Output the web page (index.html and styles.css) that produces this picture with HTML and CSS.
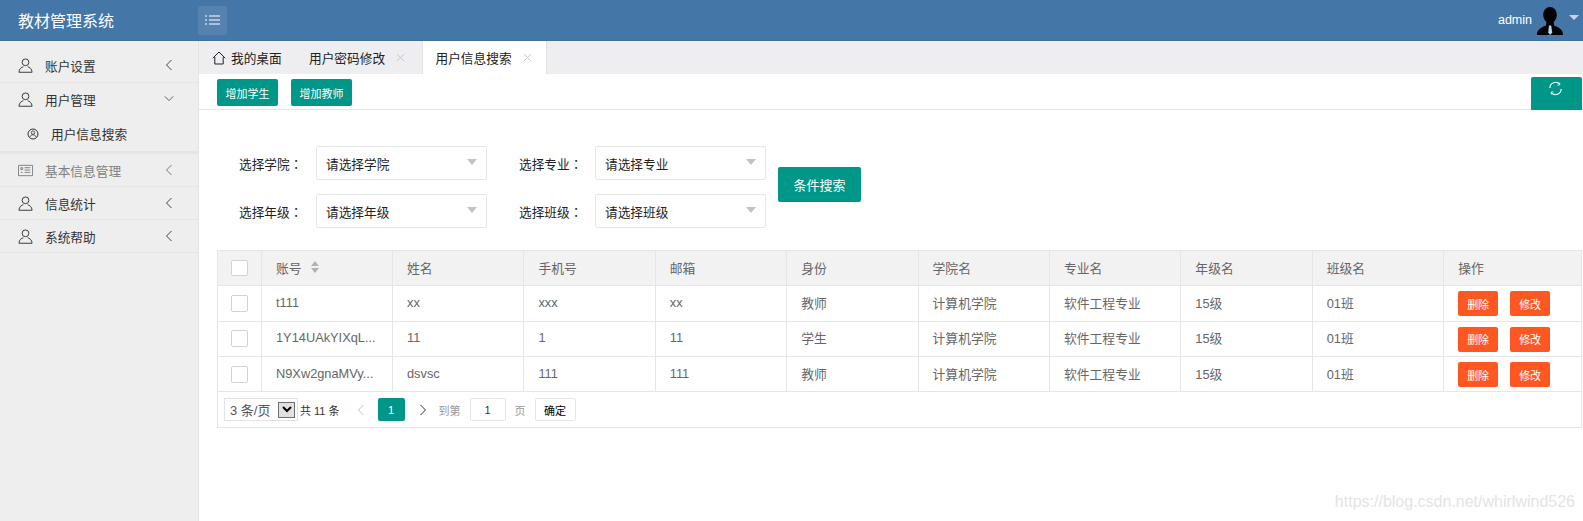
FILE: index.html
```html
<!DOCTYPE html>
<html lang="zh-CN">
<head>
<meta charset="utf-8">
<title>教材管理系统</title>
<link rel="stylesheet" href="styles.css">
</head>
<body>
<svg class="defs" width="0" height="0" aria-hidden="true">
  <symbol id="user" viewBox="0 0 16 16"><circle cx="8" cy="4.6" r="3.6" fill="none" stroke="currentColor"/><path d="M1 15.2c0-3.8 3-5.4 4.7-5.9M15 15.2c0-3.8-3-5.4-4.7-5.9M1 15.2h14" fill="none" stroke="currentColor"/></symbol>
  <symbol id="left" viewBox="0 0 8 12"><path d="M6.5 1 1.5 6l5 5" fill="none" stroke="currentColor"/></symbol>
  <symbol id="close" viewBox="0 0 10 10"><path d="M1 1l8 8M9 1l-8 8" fill="none" stroke="currentColor"/></symbol>
</svg>
<header class="topbar">
  <div class="brand">教材管理系统</div>
  <button class="menu-toggle" aria-label="菜单">
    <svg width="15" height="10" viewBox="0 0 15 10"><path d="M0 1h2M4 1h11M0 5h2M4 5h11M0 9h2M4 9h11" fill="none" stroke="#fff"/></svg>
  </button>
  <div class="account">
    <span>admin</span>
    <svg class="avatar" width="26" height="28" viewBox="0 0 26 28"><ellipse cx="13" cy="8" rx="6.800" ry="8" fill="#000"/><path d="M0 28C0 22.500 4 20.500 9 18.500L9.500 13h7l.5 5.500C22 20.500 26 22.500 26 28z" fill="#000"/><path d="M12 18.500h2.200l1 7-2 2.500-2-2.500z" fill="#b9d3e8"/></svg>
    <i class="caret-light"></i>
  </div>
</header>
<div class="body-row">
  <aside class="sidebar">
    <div class="nav-item"><svg class="nav-icon"><use href="#user"/></svg><span>账户设置</span><svg class="chev"><use href="#left"/></svg></div>
    <div class="nav-group">
      <div class="nav-item nav-open"><svg class="nav-icon"><use href="#user"/></svg><span>用户管理</span><svg class="chev-down" viewBox="0 0 12 8"><path d="M1 1.500l5 5 5-5" fill="none" stroke="currentColor"/></svg></div>
      <div class="nav-sub"><svg class="sub-icon" viewBox="0 0 12 12"><circle cx="6" cy="6" r="5" fill="none" stroke="currentColor"/><circle cx="6" cy="4.600" r="1.700" fill="none" stroke="currentColor" stroke-width=".8"/><path d="M2.800 9c.5-1.600 1.700-2.200 3.200-2.200S8.700 7.400 9.200 9" fill="none" stroke="currentColor" stroke-width=".8"/></svg><span>用户信息搜索</span></div>
    </div>
    <div class="nav-item nav-muted"><svg class="nav-icon" viewBox="0 0 16 16"><path d="M.5 2.500h15v11H.5zM3 5h2v2H3zM7 5h6M7 7.500h6M7 10h6M3 10h2" fill="none" stroke="currentColor"/></svg><span>基本信息管理</span><svg class="chev"><use href="#left"/></svg></div>
    <div class="nav-item"><svg class="nav-icon"><use href="#user"/></svg><span>信息统计</span><svg class="chev"><use href="#left"/></svg></div>
    <div class="nav-item"><svg class="nav-icon"><use href="#user"/></svg><span>系统帮助</span><svg class="chev"><use href="#left"/></svg></div>
  </aside>
  <main class="main">
    <nav class="tabs">
      <div class="tab tab-home"><svg width="14" height="14" viewBox="0 0 14 14"><path d="M.8 7.200 7 1l6.200 6.200M2.800 6v7h8.400V6" fill="none" stroke="#222"/></svg><span>我的桌面</span></div>
      <div class="tab tab-pw"><span>用户密码修改</span><svg class="tab-close"><use href="#close"/></svg></div>
      <div class="tab tab-active"><span>用户信息搜索</span><svg class="tab-close"><use href="#close"/></svg></div>
    </nav>
    <div class="toolbar">
      <button class="btn btn-sm">增加学生</button>
      <button class="btn btn-sm">增加教师</button>
      <button class="btn btn-refresh" aria-label="刷新"><svg width="15" height="15" viewBox="0 0 16 16"><path d="M2 7.500A6 6 0 0 1 12.500 3.500M14 8.500A6 6 0 0 1 3.500 12.500" fill="none" stroke="#fff" stroke-width="1.200"/><path d="M12.500 1.500v2.800H10M3.500 14.500v-2.800H6" fill="none" stroke="#fff" stroke-width=".8"/></svg></button>
    </div>
    <section class="content">
      <form class="filters">
        <div class="filter-grid">
          <label class="flabel">选择学院<span class="colon" lang="zh-TW">：</span></label><div class="select"><span>请选择学院</span><i class="caret"></i></div>
          <label class="flabel flabel-far">选择专业<span class="colon" lang="zh-TW">：</span></label><div class="select"><span>请选择专业</span><i class="caret"></i></div>
          <label class="flabel">选择年级<span class="colon" lang="zh-TW">：</span></label><div class="select"><span>请选择年级</span><i class="caret"></i></div>
          <label class="flabel flabel-far">选择班级<span class="colon" lang="zh-TW">：</span></label><div class="select"><span>请选择班级</span><i class="caret"></i></div>
        </div>
        <button type="button" class="btn btn-search">条件搜索</button>
      </form>
      <div class="table-box">
        <table class="grid">
          <colgroup><col class="c-check"><col class="c-id"><col class="c"><col class="c"><col class="c"><col class="c"><col class="c"><col class="c"><col class="c"><col class="c"><col></colgroup>
          <thead>
            <tr>
              <th class="check"><i class="box box-head"></i></th>
              <th><span class="cell">账号<span class="sort"><i class="up"></i><i class="down"></i></span></span></th>
              <th><span class="cell">姓名</span></th><th><span class="cell">手机号</span></th><th><span class="cell">邮箱</span></th><th><span class="cell">身份</span></th><th><span class="cell">学院名</span></th><th><span class="cell">专业名</span></th><th><span class="cell">年级名</span></th><th><span class="cell">班级名</span></th><th><span class="cell">操作</span></th>
            </tr>
          </thead>
          <tbody>
            <tr>
              <td class="check"><i class="box"></i></td><td><span class="cell">t111</span></td><td><span class="cell">xx</span></td><td><span class="cell">xxx</span></td><td><span class="cell">xx</span></td><td><span class="cell">教师</span></td><td><span class="cell">计算机学院</span></td><td><span class="cell">软件工程专业</span></td><td><span class="cell">15级</span></td><td><span class="cell">01班</span></td>
              <td><span class="cell ops"><button class="btn-op">删除</button><button class="btn-op">修改</button></span></td>
            </tr>
            <tr>
              <td class="check"><i class="box"></i></td><td><span class="cell">1Y14UAkYIXqL...</span></td><td><span class="cell">11</span></td><td><span class="cell">1</span></td><td><span class="cell">11</span></td><td><span class="cell">学生</span></td><td><span class="cell">计算机学院</span></td><td><span class="cell">软件工程专业</span></td><td><span class="cell">15级</span></td><td><span class="cell">01班</span></td>
              <td><span class="cell ops"><button class="btn-op">删除</button><button class="btn-op">修改</button></span></td>
            </tr>
            <tr>
              <td class="check"><i class="box"></i></td><td><span class="cell">N9Xw2gnaMVy...</span></td><td><span class="cell">dsvsc</span></td><td><span class="cell">111</span></td><td><span class="cell">111</span></td><td><span class="cell">教师</span></td><td><span class="cell">计算机学院</span></td><td><span class="cell">软件工程专业</span></td><td><span class="cell">15级</span></td><td><span class="cell">01班</span></td>
              <td><span class="cell ops"><button class="btn-op">删除</button><button class="btn-op">修改</button></span></td>
            </tr>
          </tbody>
        </table>
        <div class="pager">
          <div class="size-select"><span>3 条/页</span><i class="native-arrow"><svg width="10" height="7" viewBox="0 0 10 7"><path d="M1 1l4 4 4-4" fill="none" stroke="#000" stroke-width="2"/></svg></i></div>
          <span class="total">共 11 条</span>
          <svg class="pg-prev" width="8" height="12"><use href="#left"/></svg>
          <span class="page-cur">1</span>
          <svg class="pg-next" width="8" height="12" viewBox="0 0 8 12"><path d="M1.500 1l5 5-5 5" fill="none" stroke="#333"/></svg>
          <span class="pg-text pg-goto">到第</span>
          <span class="pg-input">1</span>
          <span class="pg-text pg-unit">页</span>
          <span class="pg-ok">确定</span>
        </div>
      </div>
      <div class="watermark">https://blog.csdn.net/whirlwind526</div>
    </section>
  </main>
</div>
</body>
</html>
```
FILE: styles.css
```css
* { box-sizing: border-box; }
html, body { margin: 0; height: 100%; overflow: hidden; }
body {
  font-family: "Liberation Sans", "Noto Sans CJK SC", sans-serif;
  font-size: 12.700px;
  color: #333;
  background: #fff;
  display: flex;
  flex-direction: column;
}
.defs { position: absolute; }
button { font-family: inherit; border: 0; padding: 0; cursor: pointer; }
i { display: block; font-style: normal; }

.topbar {
  flex: none;
  height: 41px;
  background: #4476a7;
  border-bottom: 1px solid #3f6f9f;
  display: flex;
  align-items: center;
  color: #fff;
}
.brand { width: 198px; padding-left: 18px; font-size: 16px; }
.menu-toggle {
  width: 29px;
  height: 29px;
  border-radius: 2px;
  background: #5582ae;
  display: flex;
  align-items: center;
  justify-content: center;
}
.account { margin-left: auto; display: flex; align-items: center; font-size: 12.500px; }
.avatar { margin-left: 5px; margin-top: 1px; }
.caret-light {
  margin: 0 4px 0 6px;
  border: 5px solid transparent;
  border-top: 5px solid #c6d5e4;
  border-bottom: 0;
  width: 10px;
  height: 5px;
  transform: translateY(-3px);
}

.body-row { flex: 1; display: flex; min-height: 0; }
.sidebar {
  flex: none;
  width: 199px;
  background: #eee;
  border-right: 1px solid #e2e2e2;
  color: #333;
}
.nav-item {
  height: 33px;
  display: flex;
  align-items: center;
  padding: 0 24px 0 18px;
  border-bottom: 1px solid #e5e5e5;
}
.sidebar > .nav-item:first-child { height: 42px; padding-top: 8px; }
.nav-open { border-bottom: 0; }
.nav-group { border-bottom: 3px solid #e5e5e5; }
.nav-icon { width: 15px; height: 15px; margin-right: 12px; }
.nav-item span { flex: 1; }
.chev { width: 8px; height: 12px; color: #444; margin-right: 1px; margin-top: -1px; }
.chev-down { width: 10px; height: 7px; color: #444; margin-top: -3px; }
.nav-muted { color: #7f7f7f; }
.nav-muted .chev { color: #777; }
.nav-sub { height: 35px; display: flex; align-items: center; padding-left: 27px; }
.sub-icon { width: 12px; height: 12px; margin-right: 12px; }

.main { flex: 1; min-width: 0; display: flex; flex-direction: column; }
.tabs { flex: none; height: 33px; background: #eeeef0; display: flex; color: #222; }
.tab { display: flex; align-items: center; height: 33px; }
.tab-home { width: 100px; padding-left: 13px; gap: 5px; }
.tab-pw { width: 122.500px; padding-left: 10px; }
.tab-active {
  width: 125px;
  padding-left: 13px;
  background: #fff;
  border-left: 1px solid #e2e2e2;
  border-right: 1px solid #e2e2e2;
}
.tab-close { width: 9px; height: 9px; margin-left: 11px; color: #c2c2c2; }
.toolbar {
  flex: none;
  height: 36px;
  border-bottom: 1px solid #e6e6e6;
  display: flex;
  align-items: flex-start;
  padding-top: 5px;
  padding-left: 18px;
  gap: 13px;
}
.btn { background: #009688; color: #fff; border-radius: 2px; }
.btn-sm { width: 61px; height: 27px; font-size: 11px; }
.btn-refresh {
  margin-left: auto;
  margin-right: 1px;
  margin-top: -2px;
  width: 51px;
  height: 33px;
  border-radius: 2px 2px 0 0;
  display: flex;
  align-items: flex-start;
  justify-content: center;
  padding: 4px 2px 0 0;
}
.content { flex: 1; padding: 36px 1px 0 18px; position: relative; }
.filters { display: flex; align-items: flex-start; }
.filter-grid {
  display: grid;
  grid-template-columns: 77px 171px 108px 171px;
  grid-auto-rows: 34px;
  row-gap: 14px;
  padding-left: 22px;
  align-items: center;
}
.flabel { color: #222; white-space: nowrap; }
.flabel-far { padding-left: 32px; }
.colon { font-family: "Noto Sans CJK TC", sans-serif; }
.select {
  height: 34px;
  border: 1px solid #e6e6e6;
  border-radius: 2px;
  background: #fff;
  display: flex;
  align-items: center;
  justify-content: space-between;
  padding: 0 9px;
  color: #222;
}
.caret { width: 0; height: 0; border: 5.500px solid transparent; border-top: 6px solid #c2c2c2; border-bottom: 0; margin-top: -2px; }
.btn-search { width: 83px; height: 35px; font-size: 13px; margin-left: 12px; margin-top: 21px; }

.table-box { margin-top: 22px; border: 1px solid #e6e6e6; border-top: 0; }
.grid { width: 100%; border-collapse: collapse; table-layout: fixed; color: #666; }
.c-check { width: 43.500px; }
.c-id { width: 131px; }
.c { width: 131.400px; }
.grid th, .grid td { border: 1px solid #e6e6e6; height: 35.300px; padding: 0; font-weight: 400; text-align: left; font-size: 12.800px; }
.grid tr > :first-child { border-left: 0; }
.grid tr > :last-child { border-right: 0; }
.grid th { background: #f2f2f2; }
.cell { display: flex; align-items: center; padding: 0 0 2px 14px; white-space: nowrap; }
.check .box { margin: 0 auto; }
.box { width: 17px; height: 17px; border: 1px solid #d2d2d2; border-radius: 2px; background: #fff; }
.box-head { height: 16px; }
.sort { margin-left: 9px; display: flex; flex-direction: column; gap: 2px; }
.sort i { width: 0; height: 0; border: 4px solid transparent; }
.sort .up { border-top: 0; border-bottom: 5px solid #b2b2b2; }
.sort .down { border-bottom: 0; border-top: 5px solid #b2b2b2; }
.ops { gap: 12px; padding-bottom: 0; }
.btn-op { width: 40px; height: 25px; background: #ff5722; color: #fff; font-size: 11px; border-radius: 2px; margin-top: 1px; }

.pager { height: 35px; display: flex; align-items: center; padding-left: 6px; font-size: 12px; color: #333; }
.size-select {
  width: 74px;
  height: 23px;
  border: 1px solid #e2e2e2;
  display: flex;
  align-items: center;
  padding-left: 5px;
  justify-content: space-between;
  font-size: 13px;
  color: #555;
}
.native-arrow {
  width: 17px;
  height: 16px;
  margin-right: 2px;
  background: #e1e1e1;
  border: 1px solid #707070;
  display: flex;
  align-items: center;
  justify-content: center;
}
.total { margin-left: 2px; font-size: 11px; color: #333; }
.pg-prev { margin-left: 17px; color: #c2c2c2; }
.page-cur {
  width: 27px;
  height: 23px;
  margin-left: 13px;
  background: #009688;
  color: #fff;
  border-radius: 2px;
  display: flex;
  align-items: center;
  justify-content: center;
  font-size: 11px;
}
.pg-next { margin-left: 14px; }
.pg-text { color: #999; font-size: 11px; }
.pg-goto { margin-left: 12px; }
.pg-input {
  width: 36px;
  height: 23px;
  margin-left: 9px;
  border: 1px solid #e6e6e6;
  border-radius: 2px;
  display: flex;
  align-items: center;
  justify-content: center;
  color: #333;
  font-size: 11px;
}
.pg-unit { margin-left: 9px; }
.pg-ok {
  width: 41px;
  height: 23px;
  margin-left: 9px;
  border: 1px solid #e6e6e6;
  border-radius: 2px;
  display: flex;
  align-items: center;
  justify-content: center;
  color: #000;
  font-size: 11px;
}
.watermark {
  position: absolute;
  right: 8px;
  bottom: 10px;
  font-size: 16px;
  color: #e4e4e4;
}
```
